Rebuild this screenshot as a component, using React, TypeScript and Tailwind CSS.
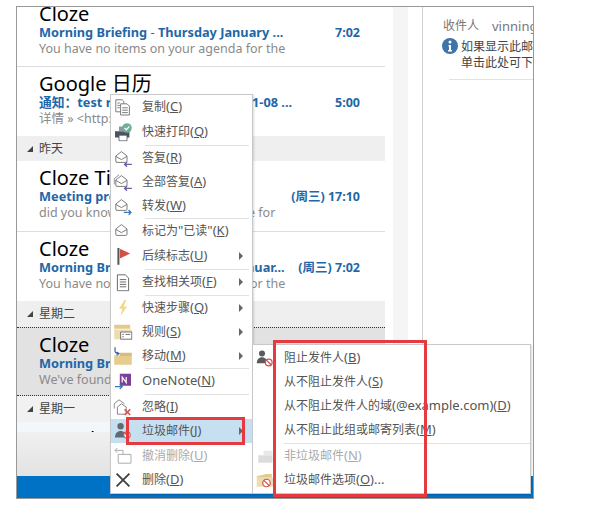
import type { ReactNode } from 'react'

const cjk = '"Noto Sans", "Noto Sans CJK SC", sans-serif'

type IconName =
  | 'copy' | 'print' | 'reply' | 'replyAll' | 'forward' | 'read' | 'flag' | 'doc' | 'bolt'
  | 'rules' | 'move' | 'onenote' | 'ignore' | 'junk' | 'undo' | 'del' | 'block' | 'notJunk' | 'junkOptions'

function MenuIcon({ name }: { name: IconName }) {
  const envelope = (
    <path d="M3 9.500 10 4l7 5.500V16a1.500 1.500 0 0 1-1.500 1.500h-11A1.500 1.500 0 0 1 3 16zM3 10l7 4 7-4" fill="none" stroke="#777" strokeWidth="1.200" />
  )
  return (
    <svg viewBox="0 0 24 24" className="w-6 h-6 shrink-0">
      {name === 'copy' && (
        <g fill="#fff" stroke="#777" strokeWidth="1.200">
          <path d="M3 3h8l2 2v13H3z" />
          <path d="M9 8h8l3 3v11H9z" />
          <path d="M11 13h7M11 16h7M11 19h7M5 7h3M5 10h3M5 13h3" fill="none" />
        </g>
      )}
      {name === 'print' && (
        <g>
          <path d="M2 11h18v8H2z" fill="#4a5560" />
          <path d="M7 5h9v6H7z" fill="#8d97a0" />
          <path d="M7 16h10v7H7z" fill="#fff" stroke="#4a5560" />
          <circle cx="17" cy="7" r="6" fill="#6fae9a" />
          <path d="m14 7 2.200 2.200L20 5" fill="none" stroke="#fff" strokeWidth="1.500" />
        </g>
      )}
      {name === 'reply' && (
        <g>
          {envelope}
          <path d="M23 20h-9m3-3-3 3 3 3" fill="none" stroke="#6b5a9e" strokeWidth="1.600" />
        </g>
      )}
      {name === 'replyAll' && (
        <g>
          <path d="M1 15V8l6-5" fill="none" stroke="#777" strokeWidth="1.100" />
          {envelope}
          <path d="M23 20h-9m3-3-3 3 3 3" fill="none" stroke="#6b5a9e" strokeWidth="1.600" />
        </g>
      )}
      {name === 'forward' && (
        <g>
          {envelope}
          <path d="M13 20h9m-3-3 3 3-3 3" fill="none" stroke="#3b78b5" strokeWidth="1.600" />
        </g>
      )}
      {name === 'read' && <g>{envelope}</g>}
      {name === 'flag' && (
        <g>
          <path d="M5 2h2.500v21H5z" fill="#555" />
          <path d="M8 3l13 6-13 6z" fill="#d2504a" />
        </g>
      )}
      {name === 'doc' && (
        <path d="M5 3h10l4 4v16H5zM8 9h8M8 12h8M8 15h8M8 18h8" fill="#fff" stroke="#666" strokeWidth="1.200" />
      )}
      {name === 'bolt' && <path d="M14 2 7 13h4l-2 9 8-12h-4l3-8z" fill="#f0d98a" />}
      {name === 'rules' && (
        <g>
          <path d="M1 3h20v5H1z" fill="#e3c98c" />
          <path d="M1 9h22v12H1z" fill="#eddcb0" />
          <path d="M9 12h14v9H9z" fill="#fff" stroke="#555" />
          <path d="M11 15h2M15 15h6M11 18h2" stroke="#555" />
        </g>
      )}
      {name === 'move' && (
        <g>
          <path d="M1 11h22v12H1z" fill="#e6cd8d" />
          <path d="M8 8h15v4H8z" fill="#d9bc78" />
          <path d="M2 1v4c0 3 2 4 5 4M4 7l3 2-3 2" fill="none" stroke="#3a5fa8" strokeWidth="1.500" />
        </g>
      )}
      {name === 'onenote' && (
        <g>
          <path d="M8 3h14v15H8z" fill="#7b3f98" />
          <path d="M11 14V7l5 7V7" fill="none" stroke="#fff" strokeWidth="1.500" />
          <path d="M2 19h9m-3-3 3 3-3 3" fill="none" stroke="#3b78b5" strokeWidth="1.600" />
        </g>
      )}
      {name === 'ignore' && (
        <g>
          <path d="M1 14V8l6-5 7 5" fill="none" stroke="#777" strokeWidth="1.100" />
          <path d="M5 12 10 8l6 4v9H5z" fill="none" stroke="#777" strokeWidth="1.100" />
          <path d="m14 15 7 7m0-7-7 7" stroke="#d9534f" strokeWidth="2" />
        </g>
      )}
      {name === 'junk' && (
        <g>
          <circle cx="9" cy="6" r="4" fill="#5f6b73" />
          <path d="M2 20c0-5 3-8 7-8s7 3 7 8z" fill="#5f6b73" />
          <circle cx="17" cy="17" r="4" fill="#fff" stroke="#c8605c" strokeWidth="1.500" />
          <path d="m14.500 14.500 5 5" stroke="#c8605c" strokeWidth="1.500" />
        </g>
      )}
      {name === 'undo' && (
        <g fill="none" stroke="#aaa" strokeWidth="1.200">
          <path d="M6 10h16v11H6z" />
          <path d="M12 5H2m3-3L2 5l3 3" />
          <path d="M12 5v5" />
        </g>
      )}
      {name === 'del' && <path d="m4 4 16 16M20 4 4 20" stroke="#444" strokeWidth="2.400" />}
      {name === 'block' && (
        <g>
          <circle cx="8" cy="6" r="4" fill="#5a5a5a" />
          <path d="M1 19c0-5 3-8 7-8s7 3 7 8z" fill="#5a5a5a" />
          <circle cx="17" cy="18" r="4.500" fill="#fff" stroke="#d0504c" strokeWidth="1.600" />
          <path d="m14 15 6 6" stroke="#d0504c" strokeWidth="1.600" />
        </g>
      )}
      {name === 'notJunk' && (
        <g>
          <path d="M3 11h19v10H3z" fill="#dcdcdc" />
          <path d="M10 5h12v6H10z" fill="#e8e8e8" />
        </g>
      )}
      {name === 'junkOptions' && (
        <g>
          <path d="M1 7 14 4h7v5H1z" fill="#e3c98c" />
          <path d="M1 9h22v12H1z" fill="#eddcb0" />
          <circle cx="14" cy="16" r="5" fill="#fff" stroke="#d0504c" strokeWidth="1.600" />
          <path d="m10.500 12.500 7 7" stroke="#d0504c" strokeWidth="1.600" />
        </g>
      )}
    </svg>
  )
}

// CJK runs sit at 12px, latin runs a little larger, like the menu font in the shot
function Mixed({ text }: { text: string }) {
  return (
    <>
      {text.split(/([\x20-\x7e]+)/).filter(Boolean).map((part, i) => (
        <span key={i} className={/^[\x20-\x7e]/.test(part) ? 'text-[13px]' : 'text-[12px]'}>{part}</span>
      ))}
    </>
  )
}

function Label({ text, hot, tail }: { text: string; hot: string; tail?: string }) {
  return (
    <span className="whitespace-nowrap text-[13px] leading-[16px] block -mt-[2px]">
      <Mixed text={text} />(<span className="underline">{hot}</span>){tail}
    </span>
  )
}

interface Item {
  icon: IconName
  text: string
  hot: string
  arrow?: boolean
  disabled?: boolean
  active?: boolean
}

function MainItem({ item, className }: { item: Item; className?: string }) {
  return (
    <div
      className={`h-6 flex items-center pr-[9px] ${item.active ? 'bg-[#c6dff1]' : ''} ${item.disabled ? 'text-[#ababab]' : 'text-[#555]'} ${className ?? ''}`}
    >
      <div className="w-6 flex justify-center scale-[0.8] mr-[7px]">
        <MenuIcon name={item.icon} />
      </div>
      <div className="flex-1">
        <Label text={item.text} hot={item.hot} />
      </div>
      {item.arrow && <div className="w-0 h-0 border-y-[4px] border-y-transparent border-l-[4px] border-l-[#666]" />}
    </div>
  )
}

function Sep({ className }: { className: string }) {
  return (
    <div className={`pl-[34px] pr-[3px] flex items-center ${className}`}>
      <div className="h-px w-full bg-[#e2e2e2]" />
    </div>
  )
}

function SubIcon({ name }: { name?: IconName }) {
  return (
    <div className="w-6 flex justify-center scale-[0.75] mr-[7px]">
      {name ? <MenuIcon name={name} /> : null}
    </div>
  )
}

function GroupHeader({ label, className }: { label: string; className: string }) {
  return (
    <div className={`flex items-center pl-[10px] gap-[6px] text-[12px] text-[#444] ${className}`}>
      <div className="w-0 h-0 border-b-[6px] border-b-[#444] border-l-[6px] border-l-transparent" />
      <span>{label}</span>
    </div>
  )
}

function MailRow({
  title, subject, time, preview, className, shift,
}: {
  title: string
  subject: ReactNode
  time: string
  preview: string
  className: string
  shift?: boolean
}) {
  return (
    <div className={`pl-[22px] pr-[25px] overflow-hidden ${className}`}>
      <div className={`${shift ? '-mt-[10px]' : ''} pt-[6px]`}>
        <div className="text-[20px] leading-[22px] text-black whitespace-nowrap">{title}</div>
        <div className="flex justify-between leading-[15px] font-bold text-[#1f67a8]">
          <span className="text-[12.750px] whitespace-nowrap">{subject}</span>
          <span className="text-[12.500px] whitespace-nowrap">{time}</span>
        </div>
        <div className="text-[12.500px] leading-[17px] text-[#8a8a8a] whitespace-nowrap">{preview}</div>
      </div>
    </div>
  )
}

export default function App() {
  return (
    <div className="w-[616px] h-[512px] bg-white relative overflow-hidden pl-4 pt-[6px]" style={{ fontFamily: cjk }}>
      {/* Outlook window */}
      <div className="w-[518px] h-[493px] border border-[#999] flex flex-col overflow-hidden">
        <div className="flex-1 flex min-h-0">
          {/* Message list */}
          <div className="w-[368px] flex flex-col">
            <MailRow
              shift
              className="h-[60px] border-b border-[#ddd]"
              title="Cloze"
              subject={<>Morning Briefing <span className="font-normal">-</span> Thursday January ...</>}
              time="7:02"
              preview="You have no items on your agenda for the"
            />
            <MailRow
              className="h-[69px]"
              title="Google 日历"
              subject="通知：test reminder @ 周四 2015-01-08 ..."
              time="5:00"
              preview="详情 » <http://www.google.com"
            />
            <GroupHeader label="昨天" className="h-[25px] bg-[#efefef]" />
            <MailRow
              className="h-[71px] border-b border-[#ddd]"
              title="Cloze Tips"
              subject="Meeting prep"
              time="(周三) 17:10"
              preview="did you know you can use your Cloze for"
            />
            <MailRow
              className="h-[69px]"
              title="Cloze"
              subject={<>Morning Briefing <span className="font-normal">-</span> Wednesday Januar...</>}
              time="(周三) 7:02"
              preview="You have no items on your agenda for the"
            />
            <GroupHeader label="星期二" className="h-[26px] bg-[#efefef]" />
            <MailRow
              className="h-[69px] bg-[#e2e2e2] border-y border-dotted border-[#333]"
              title="Cloze"
              subject="Morning Briefing"
              time=""
              preview="We've found"
            />
            <GroupHeader label="星期一" className="h-[26px] bg-[#f1f1f1]" />
            <div className="h-[10px] bg-[#f2f7fb] overflow-hidden pl-[22px] pt-[6px] text-[20px] leading-[22px] text-black">Google 日历</div>
            <div className="flex-1 bg-linear-to-b from-[#f0f0f0] to-[#e3e3e3]" />
          </div>
          <div className="w-2 bg-white" />
          <div className="w-[15px] bg-[#f5f5f6]" />
          <div className="w-[14px] bg-white" />
          {/* Reading pane */}
          <div className="flex-1 border-l border-[#cfcfcf] overflow-hidden pt-[11px] pl-[20px]">
            <div className="flex gap-[13px] text-[12px] leading-[16px] text-[#777] whitespace-nowrap">
              <span>收件人</span>
              <span className="text-[13px]">vinning</span>
            </div>
            <div className="flex gap-[3px] mt-px -ml-[1px]">
              <svg viewBox="0 0 16 16" className="w-4 h-4 shrink-0 mt-[3px]">
                <circle cx="8" cy="8" r="8" fill="#3f74a9" />
                <circle cx="8" cy="4" r="1.500" fill="#fff" />
                <path d="M6.500 7h2.500v5h1v1.500H6V12h1V8.500h-.5z" fill="#fff" />
              </svg>
              <div className="text-[12px] leading-[16px] pt-[4px] text-[#444] whitespace-nowrap">
                <div>如果显示此邮件的方式</div>
                <div>单击此处可下载图片</div>
              </div>
            </div>
            <div className="h-px bg-[#e2e2e2] mt-[8px] ml-[6px]" />
          </div>
        </div>
        <div className="h-[22px] bg-[#0072c6]" />
      </div>

      {/* Context menu */}
      <div className="absolute left-[110px] top-[94px] w-[143px] h-[400px] bg-white border border-[#c8c8c8] shadow-[1px_1px_2px_rgba(0,0,0,0.15)] flex flex-col">
        <MainItem item={{ icon: 'copy', text: '复制', hot: 'C' }} />
        <MainItem className="mt-px" item={{ icon: 'print', text: '快速打印', hot: 'Q' }} />
        <Sep className="h-[2px]" />
        <MainItem item={{ icon: 'reply', text: '答复', hot: 'R' }} />
        <MainItem item={{ icon: 'replyAll', text: '全部答复', hot: 'A' }} />
        <MainItem item={{ icon: 'forward', text: '转发', hot: 'W' }} />
        <Sep className="h-px" />
        <MainItem item={{ icon: 'read', text: '标记为"已读"', hot: 'K' }} />
        <MainItem className="mt-px" item={{ icon: 'flag', text: '后续标志', hot: 'U', arrow: true }} />
        <Sep className="h-[2px]" />
        <MainItem item={{ icon: 'doc', text: '查找相关项', hot: 'F', arrow: true }} />
        <Sep className="h-[2px]" />
        <MainItem item={{ icon: 'bolt', text: '快速步骤', hot: 'Q', arrow: true }} />
        <MainItem item={{ icon: 'rules', text: '规则', hot: 'S', arrow: true }} />
        <MainItem item={{ icon: 'move', text: '移动', hot: 'M', arrow: true }} />
        <Sep className="h-px" />
        <MainItem item={{ icon: 'onenote', text: 'OneNote', hot: 'N' }} />
        <Sep className="h-[2px]" />
        <MainItem item={{ icon: 'ignore', text: '忽略', hot: 'I' }} />
        <MainItem item={{ icon: 'junk', text: '垃圾邮件', hot: 'J', arrow: true, active: true }} />
        <MainItem className="mt-px" item={{ icon: 'undo', text: '撤消删除', hot: 'U', disabled: true }} />
        <MainItem item={{ icon: 'del', text: '删除', hot: 'D' }} />
      </div>

      {/* Junk submenu */}
      <div className="absolute left-[252px] top-[344px] w-[279px] h-[150px] bg-white border border-[#c8c8c8] shadow-[1px_1px_2px_rgba(0,0,0,0.15)] text-[#555] flex flex-col pt-px">
        {[
          { icon: 'block' as IconName, text: '阻止发件人', hot: 'B' },
          { text: '从不阻止发件人', hot: 'S' },
          { text: '从不阻止发件人的域(@example.com)', hot: 'D' },
          { text: '从不阻止此组或邮寄列表', hot: 'M' },
        ].map((row) => (
          <div key={row.hot} className="h-6 flex items-center">
            <SubIcon name={row.icon} />
            <Label text={row.text} hot={row.hot} />
          </div>
        ))}
        <div className="h-[2px] pl-[31px] flex items-center">
          <div className="h-px w-full bg-[#e2e2e2]" />
        </div>
        <div className="h-6 flex items-center text-[#ababab]">
          <SubIcon name="notJunk" />
          <Label text="非垃圾邮件" hot="N" />
        </div>
        <div className="h-6 flex items-center">
          <SubIcon name="junkOptions" />
          <Label text="垃圾邮件选项" hot="O" tail="..." />
        </div>
      </div>

      {/* Red annotation boxes */}
      <div className="absolute left-[126px] top-[417px] w-[119px] h-[28px] border-[3px] border-[#e53a40]" />
      <div className="absolute left-[273px] top-[340px] w-[154px] h-[157px] border-[3px] border-[#e53a40]" />
    </div>
  )
}
